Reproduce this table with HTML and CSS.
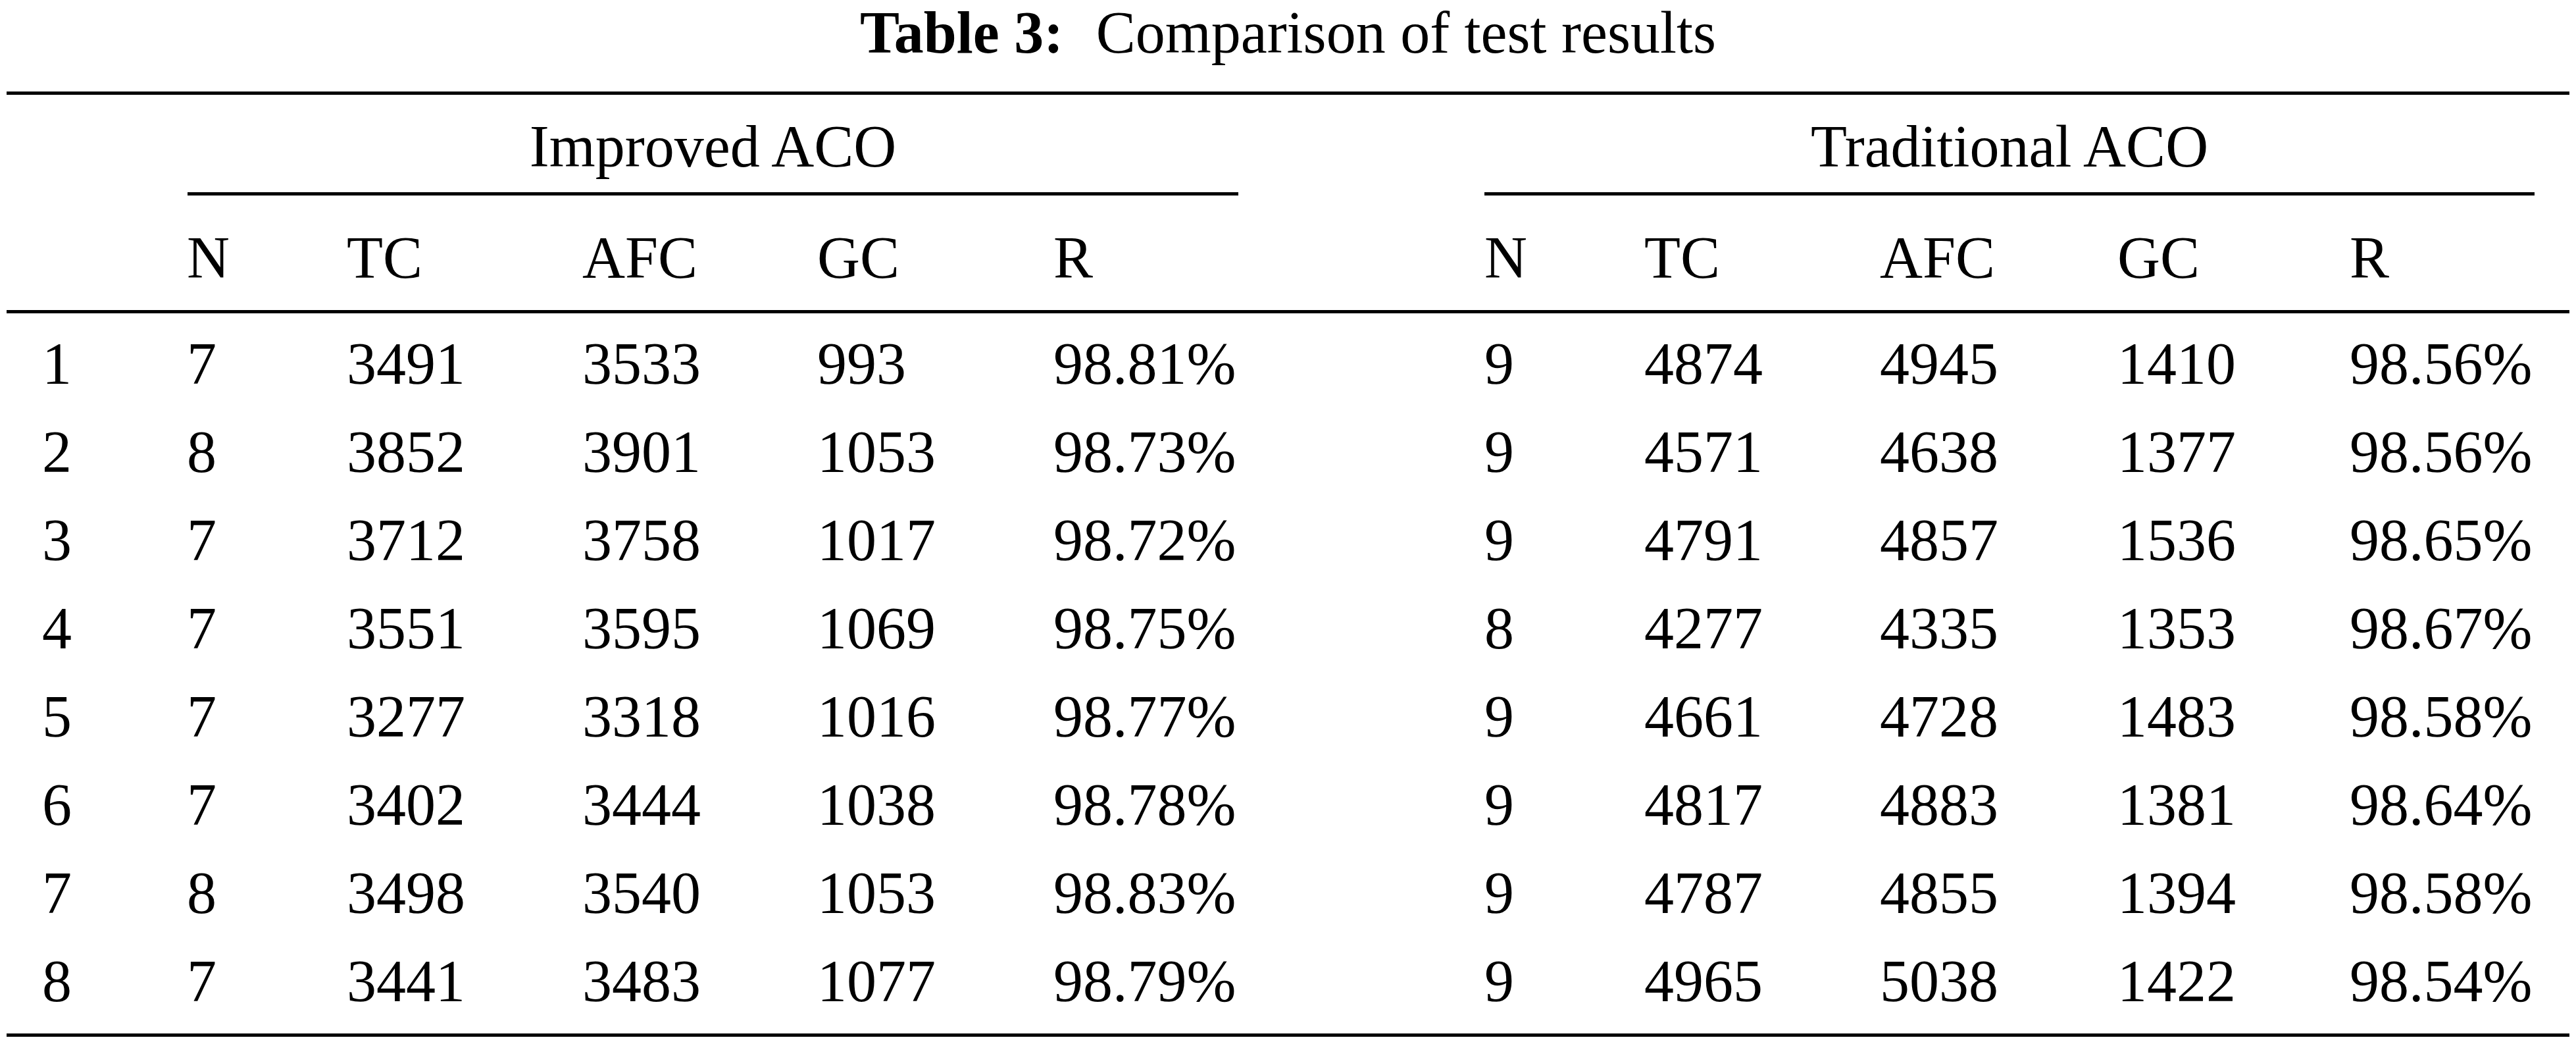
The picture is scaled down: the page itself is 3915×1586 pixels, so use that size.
FILE: index.html
```html
<!DOCTYPE HTML>
<html>

<head>
    <meta charset="utf-8">
    <meta name="viewport" content="width=device-width, initial-scale=1">
    <title>Table 3: Comparison of test results</title>
    <link rel="stylesheet" href="styles.css">
</head>

<body>
    <div class="caption">
        <span class="label">Table 3:</span>Comparison of test results
    </div>

    <div class="results">
        <div class="group-row">
            <div></div>
            <div class="group">Improved ACO</div>
            <div></div>
            <div class="group">Traditional ACO</div>
            <div></div>
        </div>

        <div class="row head">
            <div class="first"></div>
            <div>N</div>
            <div>TC</div>
            <div>AFC</div>
            <div>GC</div>
            <div>R</div>
            <div>N</div>
            <div>TC</div>
            <div>AFC</div>
            <div>GC</div>
            <div>R</div>
        </div>

        <div class="rows">
            <div class="row">
                <div class="first">1</div>
                <div>7</div><div>3491</div><div>3533</div><div>993</div><div>98.81%</div>
                <div>9</div><div>4874</div><div>4945</div><div>1410</div><div>98.56%</div>
            </div>
            <div class="row">
                <div class="first">2</div>
                <div>8</div><div>3852</div><div>3901</div><div>1053</div><div>98.73%</div>
                <div>9</div><div>4571</div><div>4638</div><div>1377</div><div>98.56%</div>
            </div>
            <div class="row">
                <div class="first">3</div>
                <div>7</div><div>3712</div><div>3758</div><div>1017</div><div>98.72%</div>
                <div>9</div><div>4791</div><div>4857</div><div>1536</div><div>98.65%</div>
            </div>
            <div class="row">
                <div class="first">4</div>
                <div>7</div><div>3551</div><div>3595</div><div>1069</div><div>98.75%</div>
                <div>8</div><div>4277</div><div>4335</div><div>1353</div><div>98.67%</div>
            </div>
            <div class="row">
                <div class="first">5</div>
                <div>7</div><div>3277</div><div>3318</div><div>1016</div><div>98.77%</div>
                <div>9</div><div>4661</div><div>4728</div><div>1483</div><div>98.58%</div>
            </div>
            <div class="row">
                <div class="first">6</div>
                <div>7</div><div>3402</div><div>3444</div><div>1038</div><div>98.78%</div>
                <div>9</div><div>4817</div><div>4883</div><div>1381</div><div>98.64%</div>
            </div>
            <div class="row">
                <div class="first">7</div>
                <div>8</div><div>3498</div><div>3540</div><div>1053</div><div>98.83%</div>
                <div>9</div><div>4787</div><div>4855</div><div>1394</div><div>98.58%</div>
            </div>
            <div class="row">
                <div class="first">8</div>
                <div>7</div><div>3441</div><div>3483</div><div>1077</div><div>98.79%</div>
                <div>9</div><div>4965</div><div>5038</div><div>1422</div><div>98.54%</div>
            </div>
        </div>
    </div>
</body>

</html>
```

FILE: styles.css
```css
html {
    font-family: "Liberation Serif", "Times New Roman", serif;
    color: #000;
    background: #fff;
}

body {
    margin: 0;
    font-size: 90px;
}

.caption {
    text-align: center;
    line-height: 100px;
    white-space: nowrap;
}

.label {
    font-weight: bold;
    margin-right: 0.55em;
}

.results {
    margin: 39px 10px 0 10px;
    width: 3895px;
    border-top: 5px solid #000;
    border-bottom: 5px solid #000;
}

.group-row {
    display: grid;
    grid-template-columns: 275px 1597px 374px 1596px 53px;
    padding-top: 12px;
    line-height: 134px;
}

.group {
    text-align: center;
    padding-bottom: 2px;
    border-bottom: 5px solid #000;
}

.row {
    display: grid;
    grid-template-columns: 274px 243px 358px 357px 359px 655px 243px 358px 361px 353px 334px;
    line-height: 134px;
    white-space: nowrap;
}

.row .first {
    padding-left: 54px;
}

.head {
    margin-top: 28px;
    padding-bottom: 12px;
    border-bottom: 5px solid #000;
}

.rows {
    padding-top: 10px;
    padding-bottom: 12px;
}
```
